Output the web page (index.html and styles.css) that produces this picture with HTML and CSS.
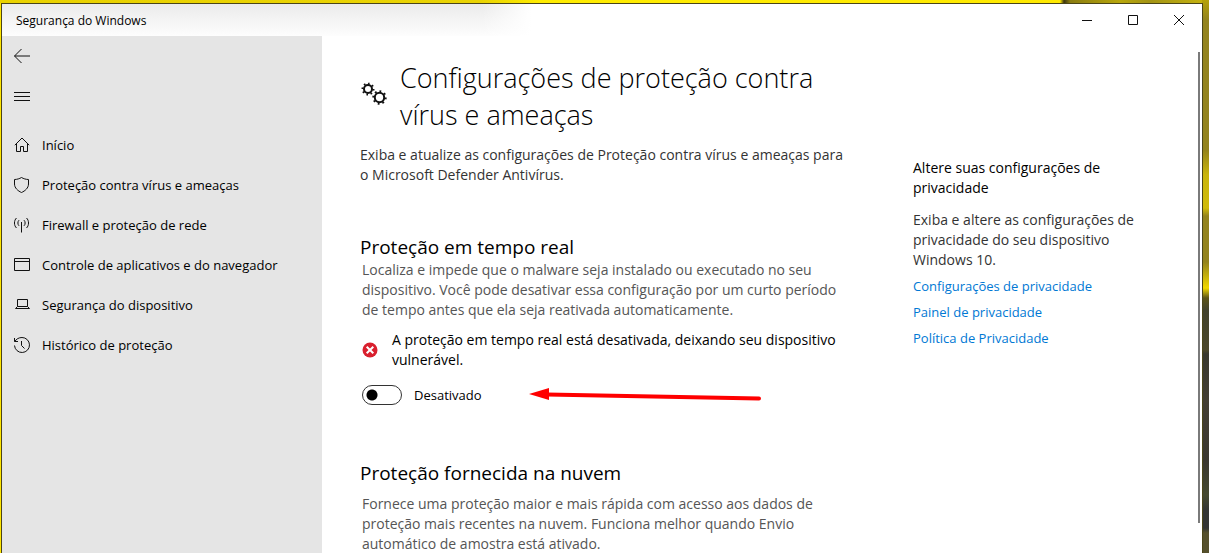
FILE: index.html
```html
<!DOCTYPE html>
<html lang="pt-BR">
<head>
    <meta charset="UTF-8">
    <meta name="viewport" content="width=device-width, initial-scale=1.0">
    <title>Segurança do Windows</title>
    <link rel="stylesheet" href="styles.css">
</head>
<body>
    <div class="window">
        <header class="titlebar">
            <span class="titlebar-text">Segurança do Windows</span>
            <div class="window-buttons">
                <button type="button" aria-label="Minimizar">
                    <svg width="10" height="10" viewBox="0 0 10 10"><path d="M0 5.5h10"/></svg>
                </button>
                <button type="button" aria-label="Maximizar">
                    <svg width="10" height="10" viewBox="0 0 10 10"><path d="M.5.5h9v9h-9z"/></svg>
                </button>
                <button type="button" aria-label="Fechar">
                    <svg width="10" height="10" viewBox="0 0 10 10"><path d="M0 0l10 10M10 0L0 10"/></svg>
                </button>
            </div>
        </header>

        <div class="layout">
            <nav class="sidebar">
                <button type="button" class="icon-button" aria-label="Voltar">
                    <svg width="16" height="16" viewBox="0 0 16 16"><path d="M.5 8H16M7.500 1L.5 8l7 7"/></svg>
                </button>
                <button type="button" class="icon-button" aria-label="Menu">
                    <svg width="16" height="16" viewBox="0 0 16 16"><path d="M0 4.500h16M0 8.500h16M0 12.500h16"/></svg>
                </button>
                <ul class="nav-list">
                    <li><a href="#inicio">
                        <svg width="16" height="16" viewBox="0 0 16 16"><path d="M.8 8.200L8 1l7.200 7.200M2.500 6.500v8h4v-5h3v5h4v-8"/></svg>
                        Início
                    </a></li>
                    <li><a href="#virus">
                        <svg width="16" height="16" viewBox="0 0 16 16"><path d="M7.500 .5c2 1.200 4.500 2 7 2v4.500c0 4-3.500 7-7 8.500C4 14 .5 11 .5 7V2.500c2.500 0 5-.8 7-2z"/></svg>
                        Proteção contra vírus e ameaças
                    </a></li>
                    <li><a href="#firewall">
                        <svg width="16" height="16" viewBox="0 0 16 16"><path d="M7.500 5v10.500M5 3.200c-1.500 1.500-1.500 4.100 0 5.600M10 3.200c1.500 1.500 1.500 4.100 0 5.600M2.500 1C-.2 3.500-.2 8.500 2.500 11M12.500 1c2.700 2.500 2.700 7.500 0 10"/></svg>
                        Firewall e proteção de rede
                    </a></li>
                    <li><a href="#aplicativos">
                        <svg width="16" height="16" viewBox="0 0 16 16"><path d="M.5 1.500h15v12H.5zM.5 4.500h15"/></svg>
                        Controle de aplicativos e do navegador
                    </a></li>
                    <li><a href="#dispositivo">
                        <svg width="16" height="16" viewBox="0 0 16 16"><path d="M3.500 2.500h10v7h-10zM3.500 9.500l-2 2h14l-2-2"/></svg>
                        Segurança do dispositivo
                    </a></li>
                    <li><a href="#historico">
                        <svg width="16" height="16" viewBox="0 0 16 16"><path d="M.5 1v3.500H4M.8 4.500C2.200 2 4.900.5 8 .5a7.500 7.500 0 1 1-7.500 8M7.500 4v4.500l3 3"/></svg>
                        Histórico de proteção
                    </a></li>
                </ul>
            </nav>

            <main class="content">
                <div class="page-title">
                    <svg class="gears" width="28" height="28" viewBox="0 0 28 28">
                        <g class="gear-rings">
                            <circle cx="8" cy="9" r="4"/>
                            <circle cx="19.500" cy="17.500" r="4.700"/>
                        </g>
                        <g class="gear-teeth">
                            <circle cx="8" cy="9" r="5.500" pathLength="32"/>
                            <circle cx="19.500" cy="17.500" r="6.200" pathLength="32"/>
                        </g>
                    </svg>
                    <h1>Configurações de proteção contra vírus e ameaças</h1>
                </div>
                <p class="intro">Exiba e atualize as configurações de Proteção contra vírus e ameaças para o Microsoft Defender Antivírus.</p>

                <section class="setting">
                    <h2>Proteção em tempo real</h2>
                    <p>Localiza e impede que o malware seja instalado ou executado no seu dispositivo. Você pode desativar essa configuração por um curto período de tempo antes que ela seja reativada automaticamente.</p>
                    <div class="warning">
                        <svg width="16" height="16" viewBox="0 0 16 16">
                            <circle cx="8" cy="8" r="7.500"/>
                            <path d="M4.700 4.700l6.600 6.600M11.300 4.700l-6.600 6.600"/>
                        </svg>
                        <span>A proteção em tempo real está desativada, deixando seu dispositivo vulnerável.</span>
                    </div>
                    <div class="toggle-row">
                        <label class="toggle">
                            <input type="checkbox" role="switch">
                            Desativado
                        </label>
                        <svg class="arrow" width="232" height="16" viewBox="0 0 232 16">
                            <path class="arrow-line" d="M18 6.500L230 10.500"/>
                            <path class="arrow-head" d="M0 6L20 0v12z"/>
                        </svg>
                    </div>
                </section>

                <section class="setting cloud">
                    <h2>Proteção fornecida na nuvem</h2>
                    <p>Fornece uma proteção maior e mais rápida com acesso aos dados de proteção mais recentes na nuvem. Funciona melhor quando Envio automático de amostra está ativado.</p>
                </section>
            </main>

            <aside class="privacy">
                <h3>Altere suas configurações de privacidade</h3>
                <p>Exiba e altere as configurações de privacidade do seu dispositivo Windows 10.</p>
                <a href="#configuracoes">Configurações de privacidade</a>
                <a href="#painel">Painel de privacidade</a>
                <a href="#politica">Política de Privacidade</a>
            </aside>
            <div class="scrollbar"></div>
        </div>
    </div>
</body>
</html>
```
FILE: styles.css
```css
* { box-sizing: border-box; }
body {
    display: flex;
    height: 100vh;
    margin: 0;
    padding: 3px 6px 0 1px;
    overflow: hidden;
    font-family: "Open Sans", "Noto Sans", sans-serif;
    font-size: 14px;
    line-height: 20px;
    color: #000;
    background:
        linear-gradient(#b5a20a 0, #93831c 20px, #93831c 150px, #c9b50c 175px, #d0bb0a 208px, #93831c 216px, #93831c 262px, #f0d800 288px, #5c5416 298px, #42422c 310px, #4b472a 350px, #38382e 354px, #443f33 400px, #3a372f 460px, #45492f 495px, #333534 510px, #333534 528px, #55502c 533px) right top / 7px 100% no-repeat,
        linear-gradient(90deg, #ead200 0, #e9d302 480px, #ffec00 540px, #ffe900 1060px, #3a3410 1064px, #8a7c10 1070px, #b8a70c 1120px, #a39414 1150px, #c2b010 1200px) left top / 100% 3px no-repeat,
        #ffe600;
}
h1, h2, h3, p, ul { margin: 0; font-weight: normal; }
a { text-decoration: none; }
svg { flex: none; fill: none; stroke: #111; }
button { display: flex; align-items: center; justify-content: center; padding: 0; border: none; background: none; }

.window { flex: 1; display: flex; flex-direction: column; border: 1px solid #4a4518; border-bottom: none; background: #fff; }

.titlebar { flex: none; display: flex; justify-content: space-between; height: 32px; background: linear-gradient(90deg, rgba(255,255,255,0) 480px, #fff 530px), linear-gradient(#ebebeb, #fdfdfd); }
.titlebar-text { padding-left: 14px; font-size: 12px; line-height: 34px; }
.window-buttons { display: flex; }
.window-buttons button { width: 46px; }

.layout { flex: 1; display: flex; min-height: 0; }

.sidebar { flex: none; width: 320px; background: #e5e5e5; }
.icon-button { width: 40px; height: 40px; }
.nav-list { padding: 9px 0 0; list-style: none; }
.nav-list a { display: flex; align-items: center; gap: 12px; height: 40px; padding-left: 12px; font-size: 13px; color: #000; }

.content { flex: none; width: 530px; padding: 23px 0 0 38px; }
.page-title { display: flex; align-items: flex-start; gap: 12px; }
h1 { font-size: 27px; font-weight: 300; line-height: 37px; }
.gears { margin-top: 21px; }
.gear-rings { stroke-width: 2; }
.gear-teeth { stroke-width: 2; stroke-dasharray: 1.5 2.5; }
.intro { margin-top: 12px; color: #333; }

.setting { margin-top: 49px; }
.setting h2 { font-size: 19px; line-height: 26px; }
.setting p { padding-left: 2px; color: #555; }
.setting.cloud { margin-top: 50px; }
.cloud p { margin-top: 8px; }

.warning { display: flex; align-items: center; gap: 14px; margin-top: 10px; padding-left: 2px; }
.warning circle { fill: #d9202e; stroke: none; }
.warning path { stroke: #fff; stroke-width: 2; }

.toggle-row { position: relative; margin-top: 15px; }
.toggle { display: inline-flex; align-items: center; gap: 12px; padding-left: 2px; font-size: 13px; }
.toggle input { appearance: none; width: 40px; height: 20px; margin: 0; border: 1px solid #333; border-radius: 10px; background: radial-gradient(circle at 9px 9px, #000 5px, transparent 6px); }
.toggle input:checked { background: radial-gradient(circle at 29px 9px, #000 5px, transparent 6px); }

/* red marker pointing at the switch */
.arrow { position: absolute; left: 169px; top: 3px; }
.arrow-line { stroke: #f00; stroke-width: 4; stroke-linecap: round; }
.arrow-head { fill: #f00; stroke: none; }

.privacy { flex: 1; display: flex; flex-direction: column; padding: 122px 40px 0 61px; }
.privacy h3 { font-size: 14px; line-height: 20px; }
.privacy p { margin: 12px 0 3px; color: #333; }
.privacy a { font-size: 13px; line-height: 26px; color: #0078d4; }

.scrollbar { flex: none; width: 2px; height: 471px; margin: 16px 2px 0 0; background: #7a7a7a; }
```
